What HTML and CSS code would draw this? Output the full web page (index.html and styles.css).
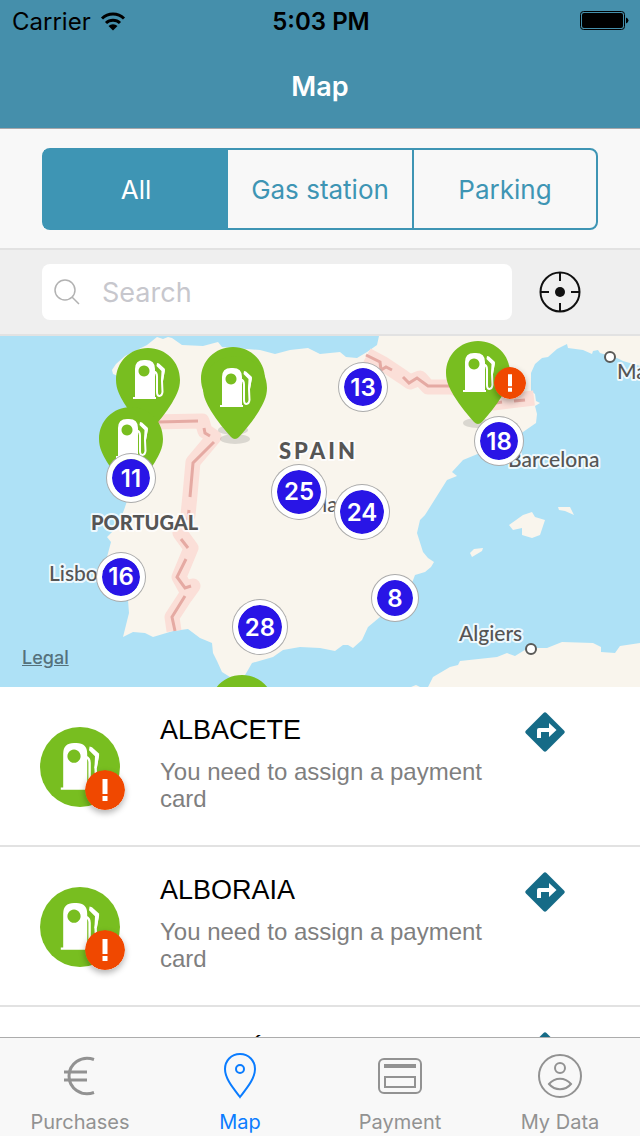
FILE: index.html
```html
<!DOCTYPE html>
<html lang="en">
<head>
  <meta charset="UTF-8">
  <meta name="viewport" content="width=device-width, initial-scale=1">
  <title>Map</title>
  <link rel="stylesheet" href="styles.css">
</head>
<body>
  <!-- shared shapes -->
  <svg class="defs" width="0" height="0" aria-hidden="true">
    <symbol id="pump" viewBox="0 0 32 40">
      <path fill="#fff" fill-rule="evenodd" d="M2 37V9q0-9 9-9h2q9 0 9 9v28h1v2H0v-2zM11 5.500a5.500 5.500 0 1 0 .01 0z"/>
      <path fill="none" stroke="#fff" stroke-width="2" d="M21 11.500q3 1 3 5V32q0 4 2.500 4t3-4L29 21l2-11"/>
      <path fill="#fff" d="M24 3l2 .5L32 9l-2 12h-2l.5-10-5-5z"/>
    </symbol>
    <symbol id="pin" viewBox="0 0 64 83">
      <path fill="#78be20" d="M32 0C14 0 0 14 0 32c0 9 4 16 8 23 6 10 14 19 20 26q4 4 8 0c6-7 14-16 20-26 4-7 8-14 8-23C64 14 50 0 32 0z"/>
      <use href="#pump" x="17" y="12" width="32" height="40"/>
    </symbol>
    <symbol id="alert" viewBox="0 0 40 40">
      <circle cx="20" cy="20" r="20" fill="#f04800"/>
      <path fill="#fff" d="M17.500 9h5v15h-5zM17.500 26h5v5h-5z"/>
    </symbol>
    <symbol id="directions" viewBox="0 0 40 40">
      <path fill="#166b87" d="M18.500 1q1.500-1.500 3 0L39 18.500q1.500 1.500 0 3L21.500 39q-1.500 1.500-3 0L1 21.500q-1.500-1.500 0-3z"/>
      <path fill="#fff" d="M12 26v-8q0-2 2-2h10v-5l7.500 7-7.500 7v-5h-8v6z"/>
    </symbol>
  </svg>

  <header class="header">
    <div class="status">
      <div class="carrier">
        <span>Carrier</span>
        <svg width="26" height="20" viewBox="0 0 26 20">
          <g fill="none" stroke="#000" stroke-width="3">
            <path d="M2 7.500a16 16 0 0 1 22 0"/>
            <path d="M6 12a10 10 0 0 1 14 0"/>
          </g>
          <path d="M8.500 15a6.500 6.500 0 0 1 9 0L13 19.500z"/>
        </svg>
      </div>
      <span class="time">5:03 PM</span>
      <svg class="battery" width="50" height="20" viewBox="0 0 50 20">
        <rect x="0.500" y="0.500" width="44" height="18" rx="3" fill="none" stroke="#000"/>
        <rect x="2" y="2" width="41" height="15" rx="2"/>
        <path d="M46 6.500q2.500 1 2.500 3t-2.500 3z"/>
      </svg>
    </div>
    <h1>Map</h1>
  </header>

  <div class="filter">
    <div class="segments">
      <button class="segment active" type="button">All</button>
      <button class="segment" type="button">Gas station</button>
      <button class="segment" type="button">Parking</button>
    </div>
  </div>

  <form class="search">
    <label class="search-box">
      <svg width="26" height="26" viewBox="0 0 26 26" fill="none" stroke="#b2b2b2" stroke-width="1.500">
        <circle cx="11" cy="11" r="10"/>
        <path d="M18 18l7 7"/>
      </svg>
      <input type="text" placeholder="Search" aria-label="Search">
    </label>
    <button class="locate" type="button" aria-label="My location">
      <svg width="42" height="42" viewBox="0 0 42 42" fill="none" stroke="#111" stroke-width="2">
        <circle cx="21" cy="21" r="19.500"/>
        <path d="M21 2v8M21 32v8M2 21h8M32 21h8"/>
        <circle cx="21" cy="21" r="5" fill="#111" stroke="none"/>
      </svg>
    </button>
  </form>

  <section class="map">
    <svg class="base" viewBox="0 0 640 351">
      <rect width="640" height="351" fill="#aee1f6"/>
      <g fill="#f9f5ed">
        <!-- Iberia and France -->
        <path d="M113 38L112 34 116 28 125 20 147 9 157 1 163 3 168 1 172 2 182 9 203 10 218 6 222 11 260 14 275 18 290 14 308 12 320 18 340 16 346 21 357 22 367 16 377 9 379 0H640V30L623 25 617 22 600 17 598 14 593 15 592 18 583 14 568 12 567 8 557 13 548 21 542 22 535 28 531 37V55L535 58 536 65 540 67 535 70 537 78 536 87 523 96 505 106 480 117 463 124 452 136 457 140 447 144 425 179 420 184 417 197 423 216 428 222 434 226 431 231 425 236 415 239 412 247 402 262 380 281 368 291 362 304 353 312 348 309H343L335 315 320 312 300 311 283 314 273 321 252 327 248 334 245 339 230 341 222 336 217 325 213 317 212 307 200 302 188 293 173 295 153 301 145 297 133 296 123 301 129 277 128 264 112 243 107 221 111 206 107 201 117 191 124 174 128 162 134 143 132 110 126 60 118 40z"/>
        <!-- Africa -->
        <path d="M428 351L433 341 450 331 458 329 460 325 497 321 507 317 515 320 528 312H547L562 306 593 307 601 311V316L615 317 620 310 640 307V351zM411 351L416 349 420 351z"/>
        <!-- Balearic islands -->
        <path d="M509 189L523 179 532 176 535 181 545 184 540 199 532 202 522 199V192L513 194zM558 171H570L574 179 565 175 559 174zM470 217L474 213 483 212 482 215 472 221z"/>
      </g>
      <g fill="none" stroke="#fbdfd8" stroke-width="15" stroke-linejoin="round">
        <path d="M150 86L202 85 205 95 214 101 193 126 190 159 188 179 180 197 191 212 179 241 185 252 193 250 185 261 172 281 174 295"/>
        <path d="M367 19L382 27 403 41 410 46 420 42 428 51H452L493 67 534 62"/>
      </g>
      <g fill="none" stroke="#e5aaa3" stroke-width="3">
        <path d="M158 86L198 85M204 92L205 97 210 100M214 106L193 127 190 161M189 174L188 184M181 203L188 212M186 223L177 241 185 252 191 250M185 260L172 281 175 295"/>
        <path d="M366 19L380 26 381 34 386 31 392 34M403 41L409 47 417 42 428 50H452M496 67L502 66M514 65L525 64"/>
      </g>
      <g class="places">
        <text class="country spain" x="279" y="123">SPAIN</text>
        <text class="country" x="91" y="194">PORTUGAL</text>
        <text x="49" y="245">Lisbon</text>
        <text x="308" y="176">Ma</text>
        <text x="508" y="131">Barcelona</text>
        <text x="459" y="305">Algiers</text>
        <text x="617" y="43">Marseille</text>
      </g>
      <g fill="#fff" stroke="#5a5a58" stroke-width="2">
        <circle cx="610" cy="21" r="5"/>
        <circle cx="531" cy="313" r="5"/>
      </g>
      <g fill="#000" fill-opacity=".12">
        <ellipse cx="233" cy="94" rx="15" ry="5"/>
        <ellipse cx="235" cy="103" rx="15" ry="5"/>
        <ellipse cx="477" cy="87" rx="14" ry="5"/>
      </g>
    </svg>

    <button class="pin" style="--x:148;--y:12" aria-label="Gas station"><svg><use href="#pin"/></svg></button>
    <button class="pin" style="--x:131;--y:71" aria-label="Gas station"><svg><use href="#pin"/></svg></button>
    <button class="pin" style="--x:233;--y:11" aria-label="Gas station"><svg><use href="#pin"/></svg></button>
    <button class="pin front" style="--x:235;--y:20" aria-label="Gas station"><svg><use href="#pin"/></svg></button>
    <button class="pin" style="--x:242;--y:339" aria-label="Gas station"><svg><use href="#pin"/></svg></button>
    <button class="pin" style="--x:478;--y:5" aria-label="Gas station, needs attention">
      <svg><use href="#pin"/></svg>
      <svg class="alert"><use href="#alert"/></svg>
    </button>

    <button class="cluster" style="--x:363;--y:51">13</button>
    <button class="cluster" style="--x:499;--y:105">18</button>
    <button class="cluster" style="--x:131;--y:142">11</button>
    <button class="cluster large" style="--x:299;--y:156">25</button>
    <button class="cluster large" style="--x:362;--y:176">24</button>
    <button class="cluster" style="--x:121;--y:241">16</button>
    <button class="cluster small" style="--x:395;--y:262">8</button>
    <button class="cluster large" style="--x:260;--y:291">28</button>

    <a class="legal" href="#">Legal</a>
  </section>

  <ul class="stations">
    <li class="station">
      <div class="station-icon">
        <svg class="fuel"><use href="#pump"/></svg>
        <svg class="alert"><use href="#alert"/></svg>
      </div>
      <div class="station-text">
        <h2>ALBACETE</h2>
        <p>You need to assign a payment card</p>
      </div>
      <a class="route" href="#" aria-label="Directions"><svg width="40" height="40"><use href="#directions"/></svg></a>
    </li>
    <li class="station">
      <div class="station-icon">
        <svg class="fuel"><use href="#pump"/></svg>
        <svg class="alert"><use href="#alert"/></svg>
      </div>
      <div class="station-text">
        <h2>ALBORAIA</h2>
        <p>You need to assign a payment card</p>
      </div>
      <a class="route" href="#" aria-label="Directions"><svg width="40" height="40"><use href="#directions"/></svg></a>
    </li>
    <li class="station">
      <div class="station-icon">
        <svg class="fuel"><use href="#pump"/></svg>
        <svg class="alert"><use href="#alert"/></svg>
      </div>
      <div class="station-text">
        <h2>ALMERÍA</h2>
      </div>
      <a class="route" href="#" aria-label="Directions"><svg width="40" height="40"><use href="#directions"/></svg></a>
    </li>
  </ul>

  <nav class="tabs">
    <a class="tab" href="#">
      <svg width="48" height="48" viewBox="0 0 48 48" fill="none" stroke="currentColor" stroke-width="3">
        <path d="M38 7.500C25 3 13 12 13 24s12 21 25 16.500M8 20h23M8 28h23"/>
      </svg>
      Purchases
    </a>
    <a class="tab active" href="#">
      <svg width="48" height="48" viewBox="0 0 48 48" fill="none" stroke="currentColor" stroke-width="2">
        <path d="M24 2C15 2 9 9 9 17c0 10 9 20 15 28 6-8 15-18 15-28 0-8-6-15-15-15z"/>
        <circle cx="24" cy="17" r="4"/>
      </svg>
      Map
    </a>
    <a class="tab" href="#">
      <svg width="48" height="48" viewBox="0 0 48 48" fill="none" stroke="currentColor" stroke-width="2">
        <rect x="3" y="7" width="42" height="34" rx="5"/>
        <rect x="9" y="25" width="30" height="10"/>
        <path stroke-width="4" d="M8 14h32"/>
      </svg>
      Payment
    </a>
    <a class="tab" href="#">
      <svg width="48" height="48" viewBox="0 0 48 48" fill="none" stroke="currentColor" stroke-width="2">
        <circle cx="24" cy="24" r="21"/>
        <circle cx="24" cy="16" r="5"/>
        <path d="M13 32c6-7 16-7 22 0-6 7-16 7-22 0z"/>
      </svg>
      My Data
    </a>
  </nav>
</body>
</html>
```
FILE: styles.css
```css
* {
  box-sizing: border-box;
}

body {
  margin: 0;
  height: 100vh;
  display: flex;
  flex-direction: column;
  overflow: hidden;
  background: #fff;
  font-family: Inter, "Liberation Sans", sans-serif;
}

button {
  padding: 0;
  border: none;
  background: none;
  font-family: inherit;
  cursor: pointer;
}

svg {
  display: block;
}

.defs {
  position: absolute;
}

/* header */
.header {
  flex: none;
  background: #458fab;
  border-bottom: 1px solid #a7a7aa;
}

.status {
  display: grid;
  grid-template-columns: 1fr auto 1fr;
  align-items: center;
  height: 42px;
  padding: 0 10px 0 12px;
  font-size: 24px;
}

.carrier {
  display: flex;
  align-items: center;
  gap: 9px;
}

.time {
  font-weight: 600;
}

.battery {
  justify-self: end;
}

.header h1 {
  margin: 0;
  padding-top: 4px;
  line-height: 82px;
  text-align: center;
  color: #fff;
  font-size: 27px;
  font-weight: 600;
}

/* filter */
.filter {
  flex: none;
  padding: 19px 42px 18px;
  background: #f8f8f8;
  border-bottom: 2px solid #e2e2e2;
}

.segments {
  display: grid;
  grid-template-columns: repeat(3, 1fr);
  height: 82px;
  border: 2px solid #3e95b4;
  border-radius: 8px;
}

.segment {
  color: #3e95b4;
  font-size: 26px;
}

.segment:last-child {
  border-left: 2px solid #3e95b4;
}

.segment.active {
  background: #3e95b4;
  color: #fff;
}

/* search */
.search {
  flex: none;
  display: flex;
  align-items: center;
  gap: 27px;
  padding: 14px 59px 14px 42px;
  background: #efefef;
  border-bottom: 2px solid #e2e2e2;
}

.search-box {
  flex: 1;
  display: flex;
  align-items: center;
  gap: 22px;
  min-width: 0;
  height: 56px;
  padding: 0 12px;
  background: #fff;
  border-radius: 8px;
}

.search-box svg {
  flex: none;
}

.search-box input {
  flex: 1;
  min-width: 0;
  padding: 0;
  border: none;
  outline: none;
  font-family: inherit;
  font-size: 27px;
}

.search-box input::placeholder {
  color: #c7c7cd;
}

.locate {
  flex: none;
  width: 42px;
  height: 42px;
}

/* map */
.map {
  flex: none;
  position: relative;
  overflow: hidden;
}

.base {
  width: 100%;
}

.places {
  font-family: Lato, sans-serif;
  font-size: 21px;
  font-weight: 500;
  fill: #555;
  stroke: #fff;
  stroke-opacity: .8;
  stroke-width: 4px;
  stroke-linejoin: round;
  paint-order: stroke;
}

.country {
  font-size: 20px;
  font-weight: 900;
}

.spain {
  font-size: 22px;
  letter-spacing: 3px;
}

.pin,
.cluster {
  position: absolute;
  left: calc(var(--x) / 640 * 100%);
  top: calc(var(--y) / 351 * 100%);
}

.pin {
  width: 64px;
  height: 83px;
  transform: translateX(-50%);
}

.pin svg {
  width: 64px;
  height: 83px;
}

.pin .alert {
  position: absolute;
  right: -16px;
  top: 26px;
  width: 32px;
  height: 32px;
}

.alert {
  border-radius: 50%;
  box-shadow: 0 3px 6px rgba(0, 0, 0, .3);
}

.cluster {
  width: 48px;
  height: 48px;
  border: 5px solid #fff;
  border-radius: 50%;
  background: #2915e6;
  background-clip: padding-box;
  box-shadow: 0 0 0 1px #aaa;
  color: #fff;
  font-size: 24px;
  font-weight: 600;
  transform: translate(-50%, -50%);
}

.cluster.large {
  width: 54px;
  height: 54px;
}

.cluster.small {
  width: 46px;
  height: 46px;
}

.legal {
  position: absolute;
  left: 22px;
  bottom: 19px;
  color: #55717c;
  font-size: 18px;
  font-weight: 500;
}

/* stations */
.stations {
  flex: 1;
  min-height: 0;
  margin: 0;
  padding: 0;
  overflow: hidden;
  list-style: none;
  font-family: "Liberation Sans", sans-serif;
}

.station {
  display: flex;
  align-items: flex-start;
  height: 160px;
  padding: 25px 75px 0 40px;
  border-bottom: 2px solid #e2e2e2;
}

.station-icon {
  position: relative;
  width: 80px;
  height: 80px;
  margin: 15px 40px 0 0;
  padding: 16px 20px;
  border-radius: 50%;
  background: #78be20;
}

.fuel {
  width: 40px;
  height: 48px;
}

.station-icon .alert {
  position: absolute;
  right: -5px;
  bottom: -3px;
  width: 40px;
  height: 40px;
}

.station-text {
  flex: 1;
  padding-right: 20px;
}

.station-text h2 {
  margin: 0 0 10px;
  font-size: 27px;
  line-height: 36px;
  font-weight: 400;
}

.station-text p {
  margin: 0;
  color: #7f7f7f;
  font-size: 24px;
  line-height: 27px;
}

/* bottom tabs */
.tabs {
  flex: none;
  display: grid;
  grid-template-columns: repeat(4, 1fr);
  height: 99px;
  background: #f8f8f8;
  border-top: 1px solid #acacac;
}

.tab {
  display: flex;
  flex-direction: column;
  align-items: center;
  gap: 8px;
  padding-top: 14px;
  color: #929292;
  font-size: 20px;
  line-height: 28px;
  text-decoration: none;
}

.tab.active {
  color: #0a7cff;
}
```
